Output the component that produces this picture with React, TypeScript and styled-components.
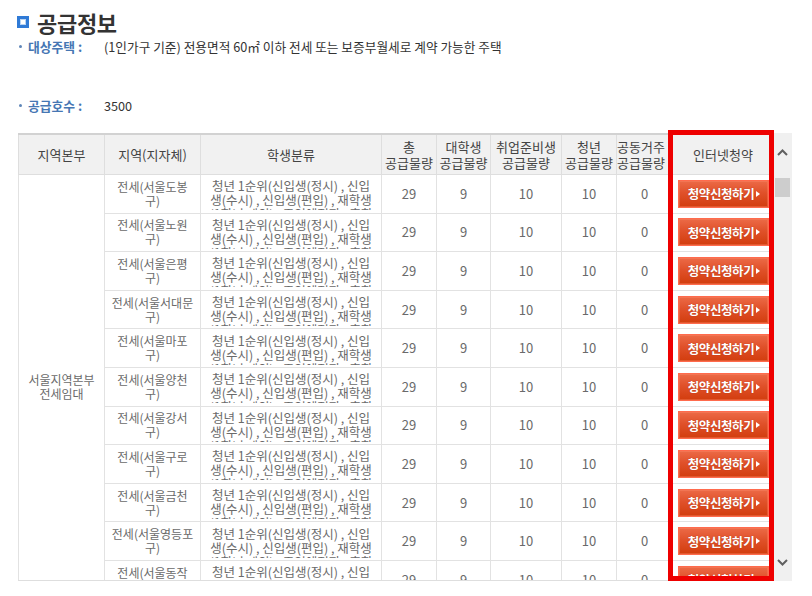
import React from "react";
import styled, { createGlobalStyle } from "styled-components";

const GlobalStyle = createGlobalStyle`
  html, body { margin: 0; padding: 0; background: #fff; }
  body {
    font-family: "Noto Sans CJK KR", "Noto Sans", "Liberation Sans", sans-serif;
    color: #333;
  }
`;

const Page = styled.div`
  position: relative;
  width: 812px;
  height: 596px;
  box-sizing: border-box;
  padding: 7px 0 0 18px;
  overflow: hidden;
`;

const TitleRow = styled.div`
  display: flex;
  align-items: center;
  gap: 8px;
  height: 30px;
`;

const TitleIcon = styled.span`
  display: block;
  width: 12px;
  height: 12px;
  margin-left: -1px;
  box-sizing: border-box;
  border: 3px solid #2f7ad6;
  background: #fff;
  box-shadow: inset 0 0 0 1px #b9d4f3;
`;

const Title = styled.h2`
  margin: 0;
  font-size: 22px;
  font-weight: 700;
  color: #333;
  line-height: 30px;
  letter-spacing: -0.3px;
`;

const InfoItem = styled.div<{ $gap?: number }>`
  display: grid;
  grid-template-columns: 10px 76px 1fr;
  align-items: center;
  height: 18px;
  margin-top: ${(p) => p.$gap ?? 0}px;
`;

const Bullet = styled.span`
  display: block;
  width: 3px;
  height: 3px;
  border-radius: 50%;
  background: #5f86b8;
  margin-left: 1px;
`;

const InfoLabel = styled.span`
  font-size: 12.8px;
  font-weight: 700;
  color: #4676b3;
  white-space: nowrap;
`;

const InfoValue = styled.span`
  font-size: 12.7px;
  color: #333;
  white-space: nowrap;
`;

const TableFrame = styled.div`
  display: flex;
  margin-top: 19px;
  width: 774px;
  height: 448px;
`;

const TableViewport = styled.div`
  width: 755px;
  height: 448px;
  box-sizing: border-box;
  border-top: 2px solid #d2d2d2;
  border-bottom: 1px solid #dedede;
  overflow: hidden;
`;

const Table = styled.table`
  width: 755px;
  table-layout: fixed;
  border-collapse: collapse;
`;

const HeadCell = styled.th<{ $left?: boolean }>`
  height: 39px;
  padding: 0;
  background: #f1f1f1;
  border: 1px solid #dedede;
  border-top: none;
  font-size: 13px;
  font-weight: 400;
  line-height: 16px;
  color: #444;
  text-align: ${(p) => (p.$left ? "left" : "center")};
  vertical-align: middle;
  overflow: hidden;
  white-space: nowrap;
`;

const BodyRow = styled.tr`
  height: 38.6px;
`;

const Cell = styled.td<{ $size?: number }>`
  padding: 0 3px;
  border: 1px solid #e2e2e2;
  font-size: ${(p) => p.$size ?? 12}px;
  line-height: 14px;
  color: #6a6a6a;
  text-align: center;
  vertical-align: middle;
  overflow: hidden;
`;

const Line = styled.span`
  display: block;
  white-space: nowrap;
`;

const ClipBox = styled.div`
  height: 31px;
  margin-top: 2px;
  overflow: hidden;
  font-size: 12.5px;
`;

const ApplyButton = styled.button`
  display: inline-flex;
  align-items: center;
  justify-content: center;
  width: 91px;
  height: 28px;
  padding: 0 0 0 2px;
  box-sizing: border-box;
  border: 1px solid #ff6b4d;
  background: linear-gradient(#ec6a47 0%, #e0512a 45%, #d23d0e 100%);
  box-shadow: inset 0 0 0 1px rgba(255, 140, 110, 0.35);
  color: #fff;
  font-family: inherit;
  font-size: 12.5px;
  font-weight: 700;
  letter-spacing: -0.4px;
  text-shadow: 0 0 1px rgba(120, 20, 0, 0.5);
  cursor: pointer;
  &::after {
    content: "";
    display: block;
    margin-left: 2px;
    border-left: 4px solid #fff;
    border-top: 3px solid transparent;
    border-bottom: 3px solid transparent;
  }
`;

const ScrollBar = styled.div`
  display: flex;
  flex-direction: column;
  width: 19px;
  height: 448px;
  background: #f0f0f0;
`;

const ArrowButton = styled.div`
  display: flex;
  align-items: center;
  justify-content: center;
  height: 38px;
  flex: none;
`;

const Track = styled.div`
  flex: 1;
  padding: 7px 2px 0;
`;

const Thumb = styled.div`
  height: 19px;
  background: #cdcdcd;
`;

const Annotation = styled.div`
  position: absolute;
  left: 668px;
  top: 130px;
  width: 106px;
  height: 451px;
  box-sizing: border-box;
  border: 5px solid #ee0000;
  pointer-events: none;
`;

const regions = ["도봉", "노원", "은평", "서대문", "마포", "양천", "강서", "구로", "금천", "영등포", "동작"];

const cols = [86, 96, 181, 55, 54, 71, 55, 56, 101];

const Chevron = ({ up }: { up?: boolean }) => (
  <svg width="11" height="7" viewBox="0 0 11 7">
    <polyline
      points={up ? "1,6 5.5,1.5 10,6" : "1,1 5.5,5.5 10,1"}
      fill="none"
      stroke="#606060"
      strokeWidth="2"
    />
  </svg>
);

export default function App() {
  return (
    <>
      <GlobalStyle />
      <Page>
        <TitleRow>
          <TitleIcon />
          <Title>공급정보</Title>
        </TitleRow>
        <InfoItem>
          <Bullet />
          <InfoLabel>대상주택 :</InfoLabel>
          <InfoValue>(1인가구 기준) 전용면적 60㎡ 이하 전세 또는 보증부월세로 계약 가능한 주택</InfoValue>
        </InfoItem>
        <InfoItem $gap={41}>
          <Bullet />
          <InfoLabel>공급호수 :</InfoLabel>
          <InfoValue>3500</InfoValue>
        </InfoItem>
        <TableFrame>
          <TableViewport>
            <Table>
              <colgroup>
                {cols.map((w, i) => (
                  <col key={i} style={{ width: w }} />
                ))}
              </colgroup>
              <thead>
                <tr>
                  <HeadCell>지역본부</HeadCell>
                  <HeadCell>지역(지자체)</HeadCell>
                  <HeadCell>학생분류</HeadCell>
                  <HeadCell>총<br />공급물량</HeadCell>
                  <HeadCell>대학생<br />공급물량</HeadCell>
                  <HeadCell>취업준비생<br />공급물량</HeadCell>
                  <HeadCell>청년<br />공급물량</HeadCell>
                  <HeadCell $left>공동거주<br />공급물량</HeadCell>
                  <HeadCell>인터넷청약</HeadCell>
                </tr>
              </thead>
              <tbody>
                {regions.map((r, i) => (
                  <BodyRow key={r}>
                    {i === 0 && (
                      <Cell rowSpan={regions.length}>
                        <Line>서울지역본부</Line>
                        <Line>전세임대</Line>
                      </Cell>
                    )}
                    <Cell>
                      <Line>전세(서울{r}</Line>
                      <Line>구)</Line>
                    </Cell>
                    <Cell>
                      <ClipBox>
                        <Line>청년 1순위(신입생(정시) , 신입</Line>
                        <Line>생(수시) , 신입생(편입) , 재학생</Line>
                        <Line>(1학년 제외) , 졸업예정자 , 휴학</Line>
                      </ClipBox>
                    </Cell>
                    <Cell $size={13}>29</Cell>
                    <Cell $size={13}>9</Cell>
                    <Cell $size={13}>10</Cell>
                    <Cell $size={13}>10</Cell>
                    <Cell $size={13}>0</Cell>
                    <Cell>
                      <ApplyButton type="button">청약신청하기</ApplyButton>
                    </Cell>
                  </BodyRow>
                ))}
              </tbody>
            </Table>
          </TableViewport>
          <ScrollBar>
            <ArrowButton>
              <Chevron up />
            </ArrowButton>
            <Track>
              <Thumb />
            </Track>
            <ArrowButton>
              <Chevron />
            </ArrowButton>
          </ScrollBar>
        </TableFrame>
        <Annotation />
      </Page>
    </>
  );
}
